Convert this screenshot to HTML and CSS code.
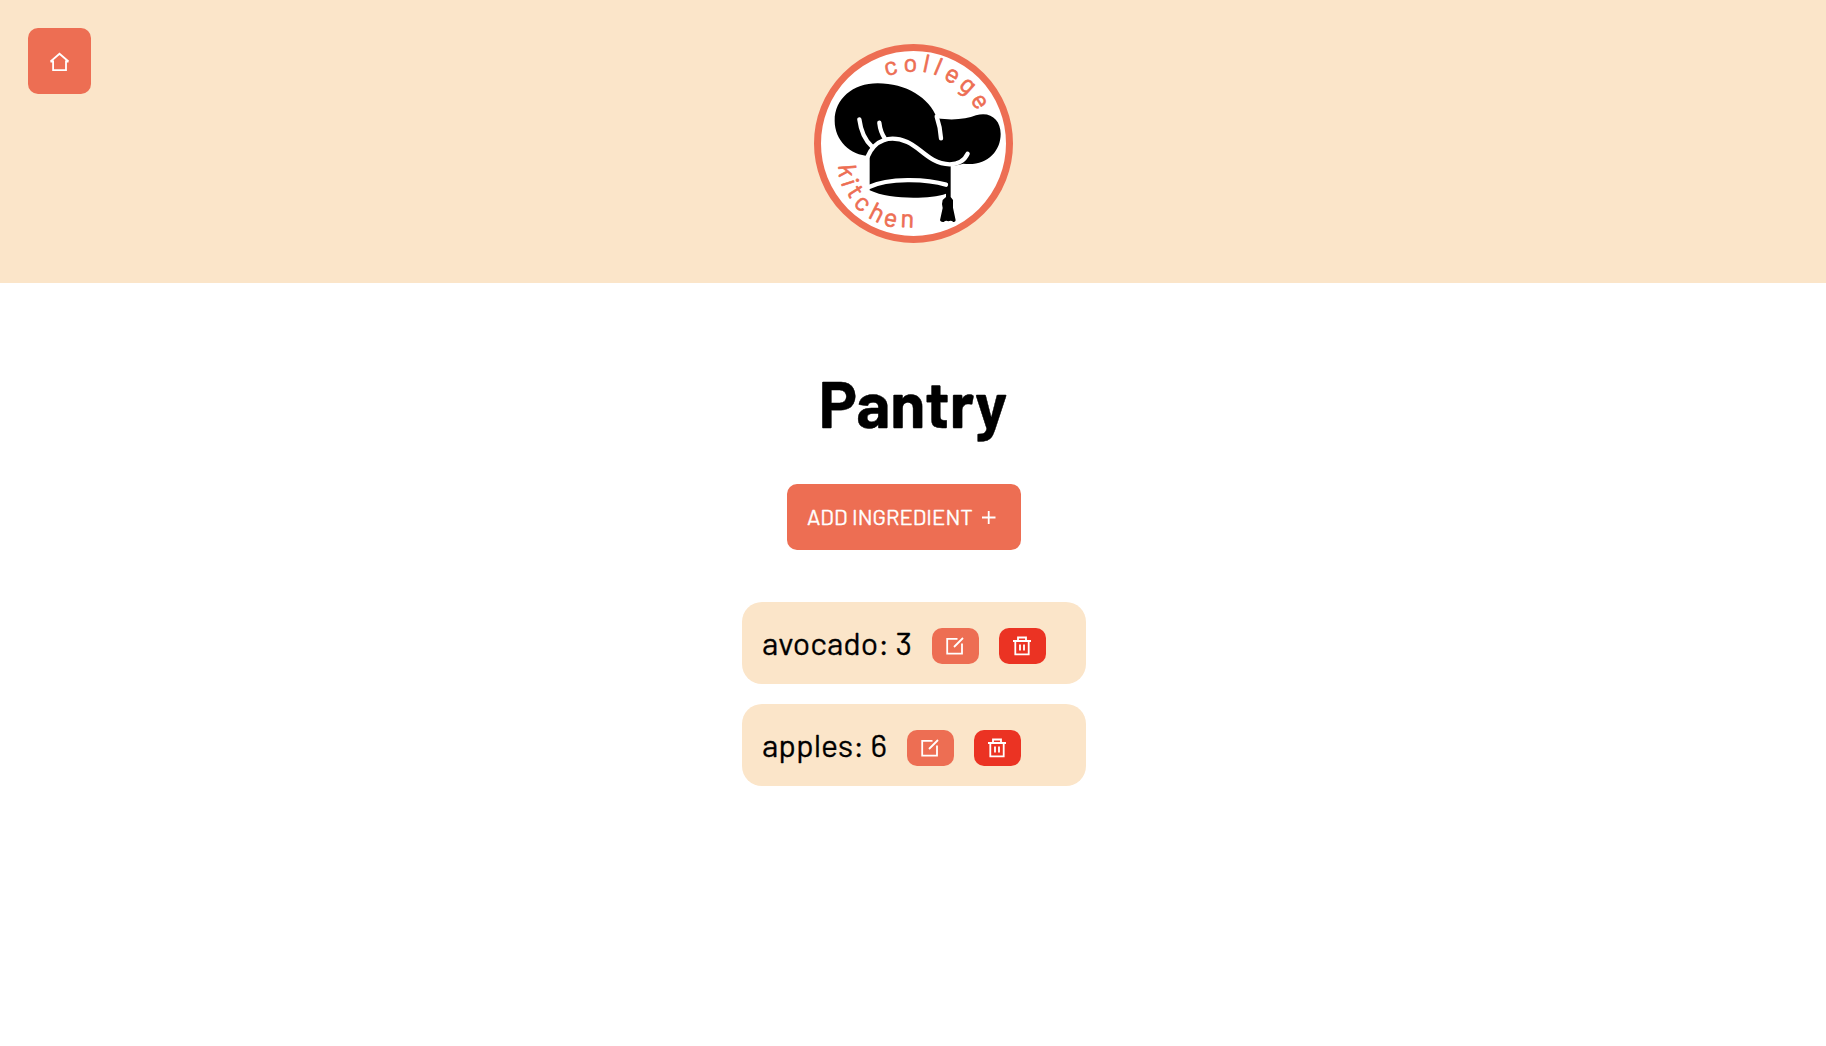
FILE: index.html
```html
<!DOCTYPE html>
<html lang="en">
<head>
<meta charset="utf-8">
<title>Pantry</title>
<link rel="stylesheet" href="styles.css">
</head>
<body>
<header class="header">
  <button class="button home" aria-label="Home">
    <svg width="20" height="20" viewBox="0 0 20 20"><path class="line" d="M0.500 9.500H3.100V18.200H16V9.500H18.500M0.500 9.500L9.500 1.700L18.500 9.500"/></svg>
  </button>
  <svg class="logo" viewBox="42 42 597 597">
    <circle class="ring" cx="340.500" cy="340.500" r="288"/>
    <path d="M208 378C150 375 104 331 104 272C104 207 158 160 233 160C318 160 388 203 411 265C460 272 500 267 528 256C571 243 602 269 602 312C602 367 557 410 490 401C478 404 463 408 452 408V501L459 510V533L467 571Q466 577 460 576Q453 570 445 574Q438 570 431 576Q422 577 420 571L428 534Q424 522 428 510L438 501V491C390 508 270 510 209 481V378Z"/>
    <g class="crease">
      <path d="M178 268Q185 322 216 350"/>
      <path d="M238 278Q241 306 255 326"/>
      <path d="M410 260Q421 292 423 325"/>
      <path d="M203 380C224 329 270 314 322 336C362 353 389 401 449 403Q489 402 503 371"/>
      <path d="M207 471C265 443 380 446 438 464"/>
    </g>
    <g class="letters">
      <text transform="translate(277 134) rotate(-14)">c</text>
      <text transform="translate(331 125) rotate(0)">o</text>
      <text transform="translate(374 126) rotate(12)">l</text>
      <text transform="translate(405 134) rotate(23)">l</text>
      <text transform="translate(446 155) rotate(30)">e</text>
      <text transform="translate(488 183) rotate(42)">g</text>
      <text transform="translate(521 226) rotate(57)">e</text>
      <text transform="translate(116 424) rotate(86)">k</text>
      <text transform="translate(125 466) rotate(72)">i</text>
      <text transform="translate(145 498) rotate(58)">t</text>
      <text transform="translate(172 537) rotate(42)">c</text>
      <text transform="translate(220 571) rotate(27)">h</text>
      <text transform="translate(267 589) rotate(12)">e</text>
      <text transform="translate(321 592) rotate(2)">n</text>
    </g>
  </svg>
</header>
<main class="main">
  <h1 class="title">Pantry</h1>
  <button class="button add"><span class="add-label">ADD INGREDIENT</span>
    <svg width="14" height="14" viewBox="0 0 14 14"><path class="line" d="M0 7.500H13.500M6.700 1V14"/></svg>
  </button>
  <ul class="list">
    <li class="item">
      <span class="name avocado">avocado: 3</span>
      <button class="button small" aria-label="Edit"><svg width="18" height="18" viewBox="0 0 18 18"><path class="line" d="M11.500 1.900H1.200V16.700H16V6.500M8 10L17 1"/></svg></button>
      <button class="button small delete" aria-label="Delete"><svg width="18" height="20" viewBox="0 0 18 20"><path class="line" d="M0 5H18M2.300 5V18.300H15.700V5M5 5V1.500H13V5M7 8.500V14.500M11 8.500V14.500"/></svg></button>
    </li>
    <li class="item">
      <span class="name apples">apples: 6</span>
      <button class="button small" aria-label="Edit"><svg width="18" height="18" viewBox="0 0 18 18"><path class="line" d="M11.500 1.900H1.200V16.700H16V6.500M8 10L17 1"/></svg></button>
      <button class="button small delete" aria-label="Delete"><svg width="18" height="20" viewBox="0 0 18 20"><path class="line" d="M0 5H18M2.300 5V18.300H15.700V5M5 5V1.500H13V5M7 8.500V14.500M11 8.500V14.500"/></svg></button>
    </li>
  </ul>
</main>
</body>
</html>
```
FILE: styles.css
```css
* { box-sizing: border-box; }
body {
  margin: 0;
  background: #fff;
  color: #000;
  font-family: Barlow, Roboto, sans-serif;
}
.header {
  display: grid;
  grid-template-columns: 1fr 199px 1fr;
  align-items: start;
  height: 283px;
  padding: 28px 28px 0;
  background: #fbe5c9;
}
.button {
  display: flex;
  align-items: center;
  justify-content: center;
  padding: 0;
  border: 0;
  border-radius: 10px;
  background: #ed6e53;
  color: #fff;
  font: inherit;
}
.home { width: 63px; height: 66px; padding-top: 2px; }
.line { fill: none; stroke: #fff; stroke-width: 1.8; }
.logo { width: 199px; height: 199px; margin-top: 16px; }
.ring { fill: #fff; stroke: #ed6e53; stroke-width: 21; }
.crease { fill: none; stroke: #fff; stroke-width: 13; stroke-linecap: round; }
.letters {
  fill: #ed6e53;
  stroke: #ed6e53;
  stroke-width: 2;
  font-size: 76px;
  text-anchor: middle;
}
.main { display: flex; flex-direction: column; align-items: center; }
.title {
  margin: 80px 0 0;
  height: 80px;
  font-size: 64px;
  line-height: 80px;
  font-weight: 700;
  -webkit-text-stroke: 0.4px;
}
.add {
  justify-content: flex-start;
  width: 234px;
  height: 66px;
  margin: 41px 18px 0 0;
  padding-left: 20px;
  font-size: 22px;
  -webkit-text-stroke: 0.35px;
}
.add-label { width: 175px; padding-bottom: 2px; text-align: left; white-space: nowrap; }
.list {
  display: flex;
  flex-direction: column;
  gap: 20px;
  width: 344px;
  margin: 52px 0 0 2px;
  padding: 0;
  list-style: none;
}
.item {
  display: flex;
  align-items: center;
  gap: 20px;
  height: 82px;
  padding: 0 20px;
  border-radius: 20px;
  background: #fbe5c9;
}
.name {
  margin-top: -2px;
  font-size: 32px;
  line-height: 40px;
  white-space: nowrap;
  -webkit-text-stroke: 0.3px;
}
.avocado { width: 150px; }
.apples { width: 125px; }
.small { width: 47px; height: 36px; margin-top: 5px; padding-right: 1px; }
.delete { background: #eb3323; }
```
